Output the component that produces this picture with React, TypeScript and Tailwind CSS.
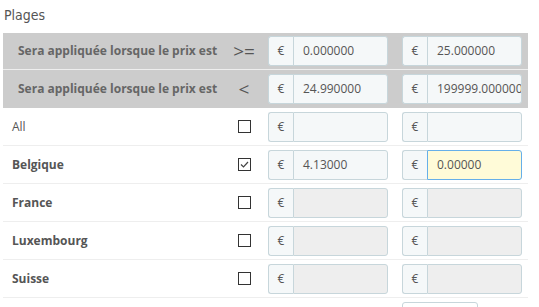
import React from "react";

type Row = {
  name: string;
  bold: boolean;
  checked: boolean;
  from: string;
  to: string;
  disabled: boolean;
  focusTo?: boolean;
};

const rows: Row[] = [
  { name: "All", bold: false, checked: false, from: "", to: "", disabled: false },
  { name: "Belgique", bold: true, checked: true, from: "4.13000", to: "0.00000", disabled: false, focusTo: true },
  { name: "France", bold: true, checked: false, from: "", to: "", disabled: true },
  { name: "Luxembourg", bold: true, checked: false, from: "", to: "", disabled: true },
  { name: "Suisse", bold: true, checked: false, from: "", to: "", disabled: true },
];

const PriceInput = ({
  value,
  disabled,
  focus,
  className,
}: {
  value: string;
  disabled?: boolean;
  focus?: boolean;
  className?: string;
}) => (
  <div className={`flex h-[30px] w-[120px] ${className ?? ""}`}>
    <div className="flex w-[25px] shrink-0 items-center justify-center rounded-l-[3px] border-y border-l border-[#c7d6db] bg-[#f5f8f9] text-[12px] text-[#555]">
      €
    </div>
    <div
      className={`flex flex-1 items-center overflow-hidden whitespace-nowrap rounded-r-[3px] border pl-[9px] pr-[2px] text-[12px] text-[#555] ${
        focus
          ? "border-[#66afe9] bg-[#fffbd8]"
          : disabled
          ? "border-[#c7d6db] bg-[#eeeeee]"
          : "border-[#c7d6db] bg-[#f5f8f9]"
      }`}
    >
      {value}
    </div>
  </div>
);

const Checkbox = ({ checked }: { checked: boolean }) => (
  <div className="flex h-[13px] w-[13px] items-center justify-center border border-[#333] bg-white">
    {checked && (
      <svg width="11" height="11" viewBox="0 0 11 11">
        <path d="M2 5.5 L4.5 8 L9 3" fill="none" stroke="#444" strokeWidth="1.2" />
      </svg>
    )}
  </div>
);

export default function App() {
  return (
    <div className="h-[307px] w-[539px] overflow-hidden bg-white font-['Open_Sans',sans-serif] text-[#555]">
      <div className="pl-[4px] pt-[5px] font-['DejaVu_Sans_Condensed','Open_Sans',sans-serif] text-[14px] leading-[20px] text-[#555]">
        Plages
      </div>
      <div className="ml-[3px] mt-[8px] w-[525px]">
        {[
          { op: ">=", a: "0.000000", b: "25.000000", h: "h-[37px]" },
          { op: "<", a: "24.990000", b: "199999.000000", h: "h-[38px]" },
        ].map((r, i) => (
          <div
            key={i}
            className={`flex ${r.h} items-center bg-[#cccccc] ${i === 0 ? "border-b border-[#eeeeee]" : ""}`}
          >
            <div className="w-[222px] pl-[15px] text-[12px] font-bold text-[#666]">
              Sera appliquée lorsque le prix est
            </div>
            <div className="flex w-[38px] justify-center text-[19px] leading-none text-[#555]">{r.op}</div>
            <PriceInput value={r.a} className="ml-[5px]" />
            <PriceInput value={r.b} className="ml-[14px]" />
          </div>
        ))}
        {rows.map((r) => (
          <div key={r.name} className="flex h-[38px] items-center border-b border-[#eeeeee]">
            <div className={`w-[222px] pl-[9px] text-[12px] text-[#555] ${r.bold ? "font-bold" : ""}`}>
              {r.name}
            </div>
            <div className="flex w-[38px] justify-center">
              <Checkbox checked={r.checked} />
            </div>
            <PriceInput value={r.from} disabled={r.disabled} className="ml-[5px]" />
            <PriceInput value={r.to} disabled={r.disabled} focus={r.focusTo} className="ml-[14px]" />
          </div>
        ))}
        <div className="ml-[399px] mt-[4px] h-[10px] w-[76px] rounded-t-[3px] border border-[#c7d6db]" />
      </div>
    </div>
  );
}
